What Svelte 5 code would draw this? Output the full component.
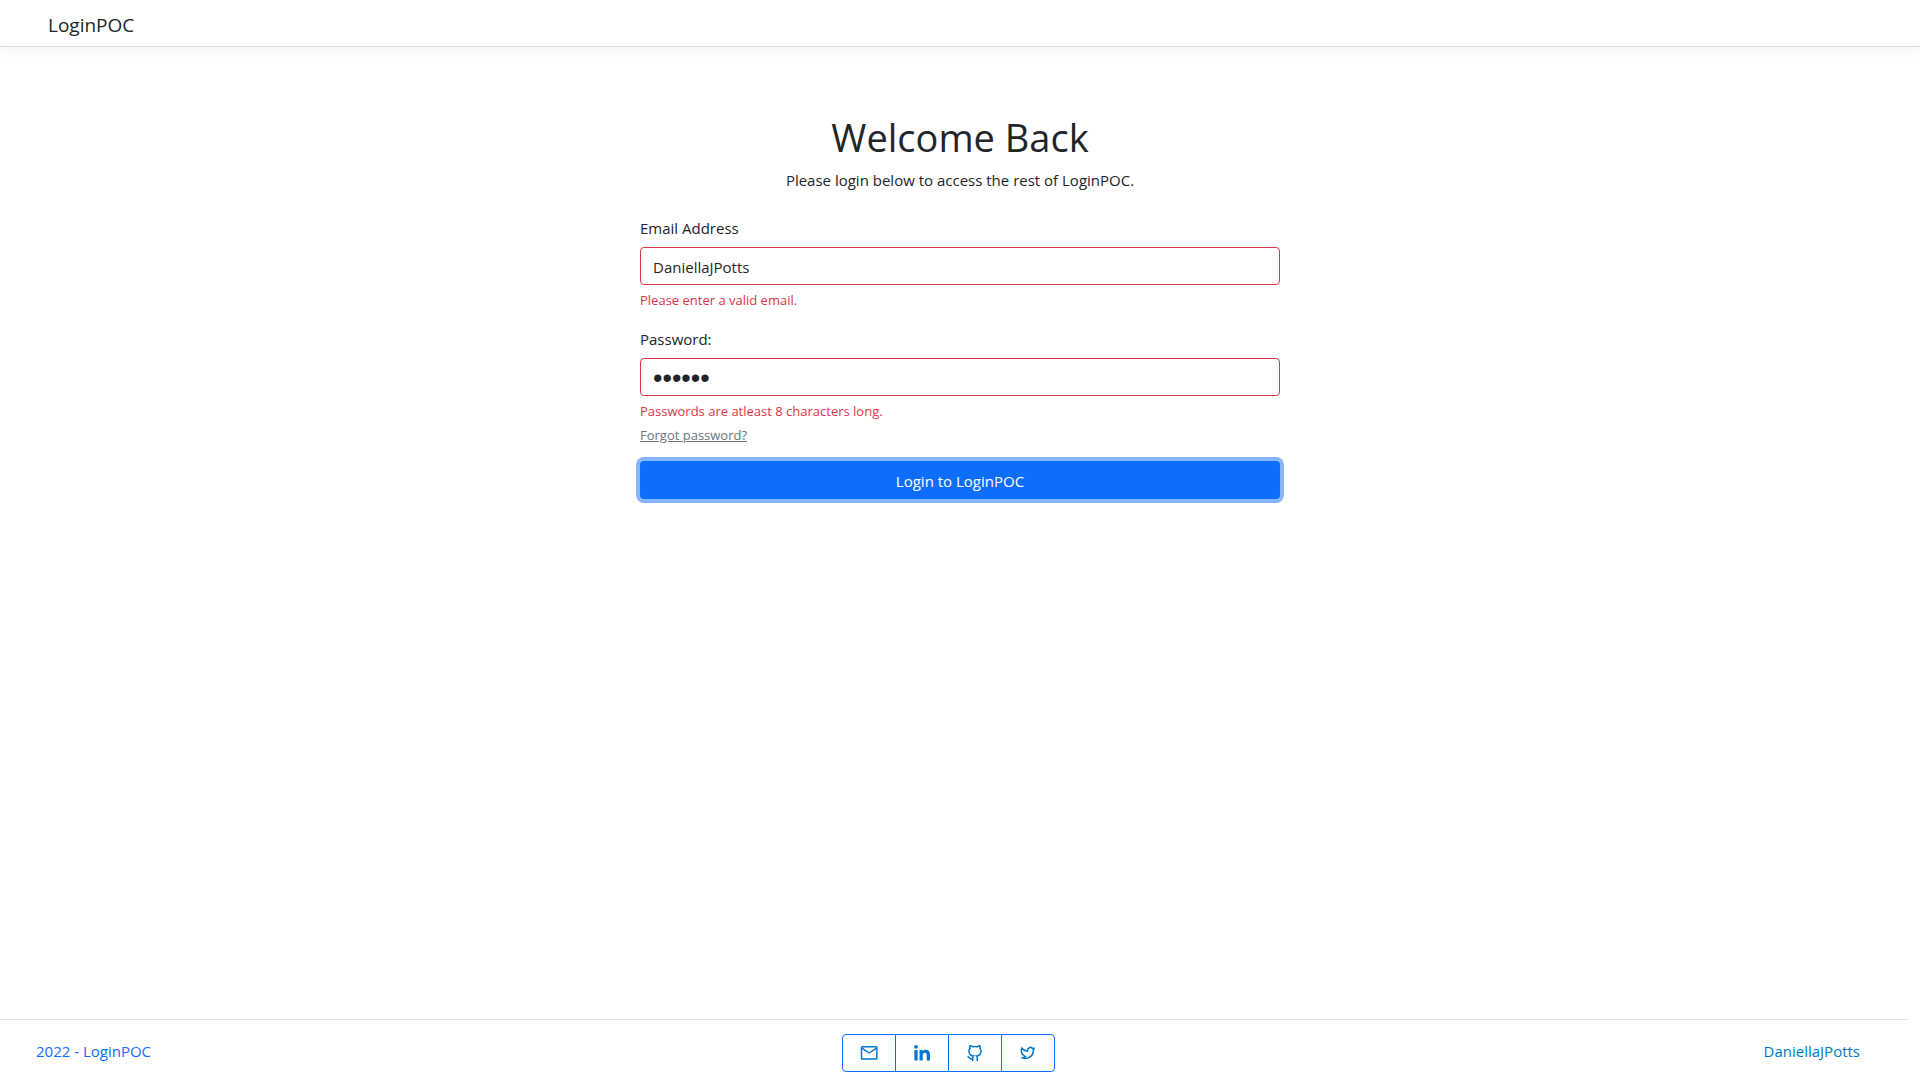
<script>
  let email = $state('DaniellaJPotts');
  let password = $state('secret');
</script>

<div class="page">
  <header class="navbar">
    <a class="brand" href="#home">LoginPOC</a>
  </header>

  <main>
    <h1>Welcome Back</h1>
    <p class="lead">Please login below to access the rest of LoginPOC.</p>
    <form onsubmit={(e) => e.preventDefault()} novalidate>
      <div class="field">
        <label for="email">Email Address</label>
        <input id="email" type="text" bind:value={email} aria-invalid="true" aria-describedby="email-error" />
        <span class="error" id="email-error">Please enter a valid email.</span>
      </div>
      <div class="field">
        <label for="password">Password:</label>
        <input id="password" class="secret" type="password" bind:value={password} aria-invalid="true" aria-describedby="password-error" />
        <span class="error" id="password-error">Passwords are atleast 8 characters long.</span>
        <a class="forgot" href="#forgot">Forgot password?</a>
      </div>
      <button class="submit" type="submit">Login to LoginPOC</button>
    </form>
  </main>

  <footer>
    <a class="home" href="#home">2022 - LoginPOC</a>
    <nav class="social" aria-label="Social links">
      <a href="#mail" aria-label="Email">
        <svg viewBox="0 0 24 24" fill="none" stroke="currentColor" stroke-width="2" stroke-linejoin="round">
          <rect x="2" y="3.500" width="20.500" height="16.500" rx="1" />
          <path d="M2.500 5.500l9.750 6.500 9.750-6.500" />
        </svg>
      </a>
      <a href="#linkedin" aria-label="LinkedIn">
        <svg viewBox="0 0 24 24" fill="currentColor">
          <circle cx="4" cy="3.800" r="2.500" />
          <path d="M1.900 8h4.300v14H1.900zM8.700 8h4v1.800c.9-1.400 2.300-2.200 4.200-2.200 3.800 0 5.700 2.300 5.700 6.300V22h-4.300v-7.200c0-2.100-.7-3.200-2.400-3.200-1.800 0-2.900 1.200-2.900 3.400V22H8.700z" />
        </svg>
      </a>
      <a href="#github" aria-label="GitHub">
        <svg viewBox="0 0 24 24" fill="none" stroke="currentColor" stroke-width="2">
          <path d="M9 22.5v-4.2c0-1 .3-1.800.9-2.300-3.200-.4-6-1.800-6-6.300 0-1.500.5-2.700 1.400-3.700-.3-1-.3-2.300.1-3.600 1.300 0 2.600.6 3.800 1.400 1.800-.5 3.800-.5 5.600 0 1.200-.8 2.500-1.400 3.800-1.400.4 1.300.4 2.600.1 3.600.9 1 1.400 2.200 1.400 3.700 0 4.500-2.800 5.900-6 6.300.6.500.9 1.300.9 2.300v4.200M9 20c-4.500.8-4.200-2.800-7-3.200" />
        </svg>
      </a>
      <a href="#twitter" aria-label="Twitter">
        <svg viewBox="0 0 24 24" fill="currentColor">
          <path d="M15.300 5.550a2.900 2.900 0 0 0-2.900 2.847l-.028 1.575a.6.600 0 0 1-.68.583l-1.561-.212c-2.054-.28-4.022-1.226-5.910-2.799-.598 3.310.570 5.603 3.383 7.372l1.747 1.098a.6.600 0 0 1 .034.993L7.793 18.170c.947.059 1.846.017 2.592-.131 4.718-.942 7.855-4.492 7.855-10.348 0-.478-1.012-2.141-2.940-2.141zm-4.900 2.810a4.900 4.900 0 0 1 8.385-3.355c.711-.005 1.316.175 2.669-.645-.335 1.640-.500 2.352-1.214 3.331 0 7.642-4.697 11.358-9.463 12.309-3.268.652-8.020-.419-9.382-1.841.694-.054 3.514-.357 5.144-1.550C5.160 15.700-.329 12.470 3.278 3.786c1.693 1.977 3.410 3.323 5.150 4.037 1.158.475 1.442.465 1.973.538z" />
        </svg>
      </a>
    </nav>
    <a class="author" href="#author">DaniellaJPotts</a>
  </footer>
</div>

<style>
  :global(body) {
    margin: 0;
  }

  .page,
  .page * {
    box-sizing: border-box;
  }

  .page {
    min-height: 100vh;
    display: flex;
    flex-direction: column;
    background: #fff;
    color: #212529;
    font-family: 'Segoe UI', 'Open Sans', 'Noto Sans', sans-serif;
    font-size: 15px;
    line-height: 24px;
  }

  .navbar {
    display: flex;
    padding: 10px 48px 6px;
    border-bottom: 1px solid #dcdce6;
    box-shadow: 0 4px 12px rgba(0, 0, 0, 0.05);
  }

  .brand {
    color: #212529;
    font-size: 19px;
    line-height: 30px;
    text-decoration: none;
  }

  main {
    flex: 1;
    width: 100%;
    max-width: 640px;
    margin: 0 auto;
    padding-top: 66px;
  }

  h1 {
    margin: 0 0 7px;
    font-size: 38px;
    font-weight: 400;
    line-height: 48px;
    text-align: center;
  }

  .lead {
    margin: 0 0 24px;
    text-align: center;
  }

  .field {
    display: flex;
    flex-direction: column;
    margin-bottom: 16px;
  }

  label {
    margin-bottom: 7px;
  }

  input {
    height: 38px;
    padding: 7px 12px 5px;
    border: 1px solid #dc3545;
    border-radius: 4px;
    background: #fff;
    color: #212529;
    font: inherit;
    outline: 0;
  }

  /* A larger face gives the masked characters full, round dots. */
  .secret {
    font-family: 'Liberation Sans', sans-serif;
    font-size: 27px;
  }

  .error {
    margin-top: 4px;
    color: #dc3545;
    font-size: 13px;
    line-height: 22px;
  }

  .forgot {
    align-self: flex-start;
    margin-top: 3px;
    color: #6c757d;
    font-size: 13px;
    line-height: 20px;
  }

  .submit {
    display: block;
    width: 100%;
    height: 38px;
    padding: 2px 12px 0;
    border: 0;
    border-radius: 4px;
    background: #0d6efd;
    box-shadow: 0 0 0 4px #86b6fe;
    color: #fff;
    font: inherit;
  }

  footer {
    display: grid;
    grid-template-columns: 1fr auto 1fr;
    align-items: center;
    margin-right: 12px;
    padding: 14px 48px 8px 36px;
    border-top: 1px solid #dee2e6;
  }

  footer a {
    text-decoration: none;
  }

  .home,
  .author {
    padding-bottom: 4px;
  }

  .home {
    color: #0d6efd;
  }

  .author {
    justify-self: end;
    color: #0077cc;
  }

  .social {
    display: flex;
    border: 1px solid #0d6efd;
    border-radius: 4px;
  }

  .social a {
    display: flex;
    align-items: center;
    justify-content: center;
    width: 53px;
    height: 36px;
    color: #0077cc;
  }

  .social a:first-child {
    width: 52px;
  }

  .social a + a {
    border-left: 1px solid #0d6efd;
  }

  svg {
    width: 18px;
    height: 18px;
  }
</style>
